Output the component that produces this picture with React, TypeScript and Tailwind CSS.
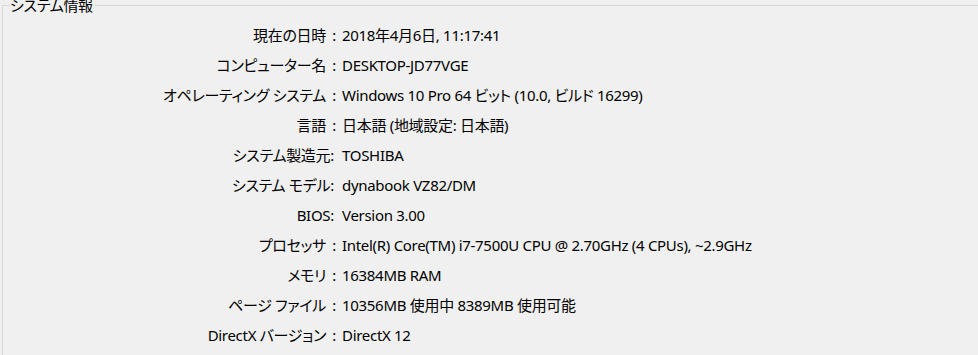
import React from "react";

type Row = { k: string; full: boolean; v: string };

const rows: Row[] = [
  { k: "現在の日時", full: true, v: "2018年4月6日, 11:17:41" },
  { k: "コンピューター名", full: true, v: "DESKTOP-JD77VGE" },
  { k: "オペレーティング システム", full: true, v: "Windows 10 Pro 64 ビット (10.0, ビルド 16299)" },
  { k: "言語", full: true, v: "日本語 (地域設定: 日本語)" },
  { k: "システム製造元", full: false, v: "TOSHIBA" },
  { k: "システム モデル", full: false, v: "dynabook VZ82/DM" },
  { k: "BIOS", full: false, v: "Version 3.00" },
  { k: "プロセッサ", full: true, v: "Intel(R) Core(TM) i7-7500U CPU @ 2.70GHz (4 CPUs), ~2.9GHz" },
  { k: "メモリ", full: true, v: "16384MB RAM" },
  { k: "ページ ファイル", full: true, v: "10356MB 使用中 8389MB 使用可能" },
  { k: "DirectX バージョン", full: true, v: "DirectX 12" },
];

export default function App() {
  return (
    <div
      className="w-[978px] h-[355px] overflow-hidden bg-[#f0f0f0] text-black relative [font-feature-settings:'palt'] tracking-[-0.3px]"
      style={{ fontFamily: '"Noto Sans", "Noto Sans CJK JP", sans-serif' }}
    >
      <div className="absolute left-[2px] top-[5px] w-[990px] h-[400px] border border-[#d9d9d9]" />
      <div className="relative pl-[10px] h-[12px] leading-[12px]">
        <span className="bg-[#f0f0f0] pr-[2px] text-[15px] relative top-[-1px]">システム情報</span>
      </div>
      <div className="relative grid grid-cols-[342px_1fr] pt-[8px]">
        {rows.map((r) => (
          <React.Fragment key={r.k}>
            <div className="h-[30px] leading-[30px] text-right text-[15px] whitespace-pre">
              {r.k}
              {r.full ? (
                <span className="inline-block w-[16px] text-center">:</span>
              ) : (
                <>
                  :<span className="inline-block w-[8px]" />
                </>
              )}
            </div>
            <div className="h-[30px] leading-[30px] text-[15px] whitespace-pre">{r.v}</div>
          </React.Fragment>
        ))}
      </div>
    </div>
  );
}
